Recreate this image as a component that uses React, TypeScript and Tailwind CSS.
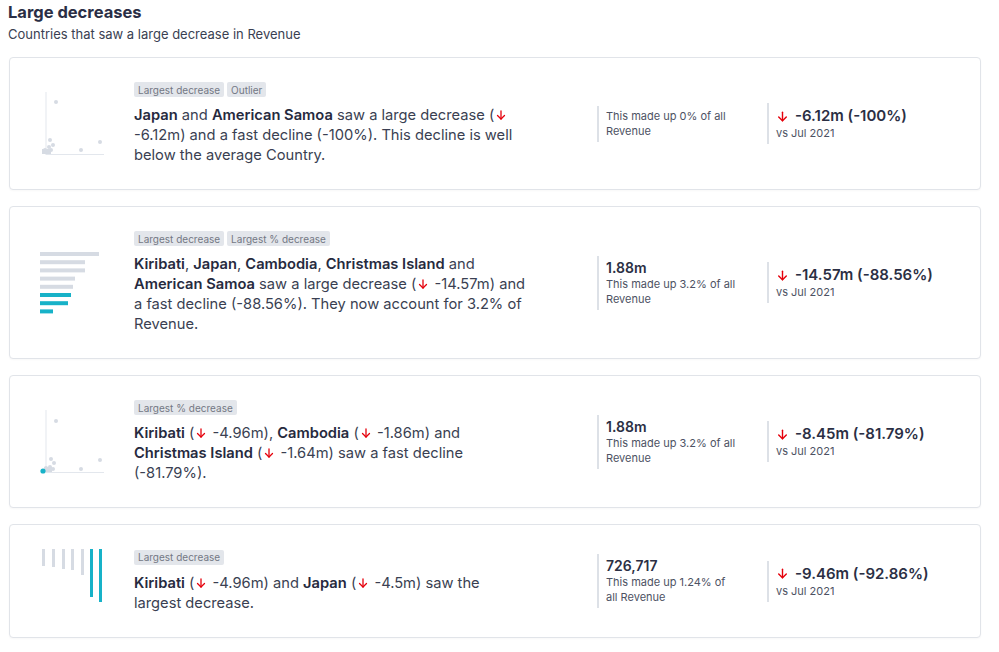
import React from "react";

const RED = "#e5000b";
const TEAL = "#17b2c8";
const GRAY = "#d6dbe3";

function Arrow({ size = 12, className = "" }: { size?: number; className?: string }) {
  return (
    <svg
      width={size}
      height={size}
      viewBox="0 0 24 24"
      fill="none"
      stroke={RED}
      strokeWidth={2.6}
      strokeLinecap="round"
      strokeLinejoin="round"
      className={"inline-block align-[-1px] " + className}
    >
      <path d="M12 4v16" />
      <path d="M5 13l7 7 7-7" />
    </svg>
  );
}

function Scatter1() {
  return (
    <svg width="64" height="64" viewBox="0 0 64 64">
      <line x1="6" y1="0" x2="6" y2="63" stroke="#e3e7ed" strokeWidth="1" />
      <line x1="6" y1="62.5" x2="64" y2="62.5" stroke="#e3e7ed" strokeWidth="1" />
      {[
        [16, 10],
        [10, 48],
        [13, 53],
        [9, 55],
        [5, 58],
        [8, 59],
        [11, 58],
        [41, 58],
        [60, 50],
      ].map(([x, y], i) => (
        <circle key={i} cx={x} cy={y} r="2" fill={GRAY} />
      ))}
      <rect x="2" y="57" width="9" height="5" fill={GRAY} />
    </svg>
  );
}

function Scatter3() {
  return (
    <svg width="64" height="64" viewBox="0 0 64 64">
      <line x1="6" y1="0" x2="6" y2="63" stroke="#e3e7ed" strokeWidth="1" />
      <line x1="6" y1="62.5" x2="64" y2="62.5" stroke="#e3e7ed" strokeWidth="1" />
      {[
        [16, 11],
        [11, 49],
        [14, 53],
        [10, 57],
        [6, 58],
        [9, 60],
        [13, 59],
        [41, 59],
        [60, 50],
      ].map(([x, y], i) => (
        <circle key={i} cx={x} cy={y} r="2" fill={GRAY} />
      ))}
      <rect x="4" y="57" width="8" height="5" fill={GRAY} />
      <circle cx="3" cy="61" r="2.6" fill={TEAL} />
    </svg>
  );
}

function HBars() {
  const bars: [number, string][] = [
    [59, GRAY],
    [45, GRAY],
    [45, GRAY],
    [35, GRAY],
    [33, GRAY],
    [31, TEAL],
    [28, TEAL],
    [13, TEAL],
  ];
  return (
    <svg width="64" height="64" viewBox="0 0 64 64">
      {bars.map(([w, c], i) => (
        <rect key={i} x="0" y={1 + i * 8.2} width={w} height="4" fill={c} />
      ))}
    </svg>
  );
}

function VBars() {
  const bars: [number, number, string][] = [
    [2, 17, GRAY],
    [12, 18, GRAY],
    [22, 20, GRAY],
    [31, 21, GRAY],
    [41, 26, GRAY],
    [50, 48, TEAL],
    [59, 53, TEAL],
  ];
  return (
    <svg width="64" height="64" viewBox="0 0 64 64">
      {bars.map(([x, h, c], i) => (
        <rect key={i} x={x} y="0" width="3" height={h} fill={c} />
      ))}
    </svg>
  );
}

function Tag({ children }: { children: React.ReactNode }) {
  return (
    <span className="inline-flex h-[15px] items-center rounded-[2px] bg-[#e3e6eb] px-[4px] text-[10px] leading-none text-[#737884]">
      {children}
    </span>
  );
}

function B({ children }: { children: React.ReactNode }) {
  return <span className="font-semibold text-[#262a3e]">{children}</span>;
}

type CardProps = {
  chart: React.ReactNode;
  tags: string[];
  text: React.ReactNode;
  value?: string;
  share: string;
  change: string;
};

function Card({ chart, tags, text, value, share, change }: CardProps) {
  return (
    <div className="flex items-center rounded-[4px] border border-[#e1e4e9] bg-white py-6 pl-[30px] pr-[23px] shadow-[0_1px_2px_rgba(0,0,0,0.03)]">
      <div className="h-[64px] w-[64px] flex-none">{chart}</div>
      <div className="ml-[30px] w-[394px] flex-none">
        <div className="flex gap-[3px]">
          {tags.map((t) => (
            <Tag key={t}>{t}</Tag>
          ))}
        </div>
        <div className="mt-[8px] text-[14.7px] leading-5 text-[#3a3f52]">{text}</div>
      </div>
      <div className="flex-1" />
      <div className="w-[170px] flex-none">
        <div className="w-[142px] border-l-2 border-[#dde1e7] py-[3px] pl-[7px]">
          {value && (
            <div className="text-[14px] font-semibold leading-[18px] text-[#2b2f44]">{value}</div>
          )}
          <div className="text-[11px] leading-[15px] text-[#4d5263]">{share}</div>
        </div>
      </div>
      <div className="w-[190px] flex-none">
        <div className="border-l-2 border-[#dde1e7] py-[3px] pl-[7px]">
          <div className="flex items-center gap-[6px] text-[15px] font-semibold leading-5 text-[#2b2f44]">
            <Arrow size={13} />
            <span>{change}</span>
          </div>
          <div className="text-[11px] leading-[15px] text-[#4d5263]">vs Jul 2021</div>
        </div>
      </div>
    </div>
  );
}

function Dn({ v }: { v: string }) {
  return (
    <>
      (<Arrow size={12} className="mx-[1px]" /> {v})
    </>
  );
}

export default function App() {
  return (
    <div
      className="min-h-screen bg-white px-2 pb-4 pr-[18px]"
      style={{ fontFamily: "Inter, 'Noto Sans', sans-serif" }}
    >
      <h1 className="text-[16.5px] font-bold leading-6 text-[#2a2e45]">Large decreases</h1>
      <p className="mt-[2px] text-[13px] leading-4 text-[#3a3f52]">
        Countries that saw a large decrease in Revenue
      </p>
      <div className="ml-px mt-[15px] flex flex-col gap-4">
        <Card
          chart={<Scatter1 />}
          tags={["Largest decrease", "Outlier"]}
          text={
            <>
              <B>Japan</B> and <B>American Samoa</B> saw a large decrease (
              <Arrow size={12} className="mx-[1px]" /> -6.12m) and a fast decline (-100%). This decline is
              well below the average Country.
            </>
          }
          share="This made up 0% of all Revenue"
          change="-6.12m (-100%)"
        />
        <Card
          chart={<HBars />}
          tags={["Largest decrease", "Largest % decrease"]}
          text={
            <>
              <B>Kiribati</B>, <B>Japan</B>, <B>Cambodia</B>, <B>Christmas Island</B> and{" "}
              <B>American Samoa</B> saw a large decrease <Dn v="-14.57m" /> and a fast decline (-88.56%).
              They now account for 3.2% of Revenue.
            </>
          }
          value="1.88m"
          share="This made up 3.2% of all Revenue"
          change="-14.57m (-88.56%)"
        />
        <Card
          chart={<Scatter3 />}
          tags={["Largest % decrease"]}
          text={
            <>
              <B>Kiribati</B> <Dn v="-4.96m" />, <B>Cambodia</B> <Dn v="-1.86m" /> and{" "}
              <B>Christmas Island</B> <Dn v="-1.64m" /> saw a fast decline (-81.79%).
            </>
          }
          value="1.88m"
          share="This made up 3.2% of all Revenue"
          change="-8.45m (-81.79%)"
        />
        <Card
          chart={<VBars />}
          tags={["Largest decrease"]}
          text={
            <>
              <B>Kiribati</B> <Dn v="-4.96m" /> and <B>Japan</B> <Dn v="-4.5m" /> saw the largest
              decrease.
            </>
          }
          value="726,717"
          share="This made up 1.24% of all Revenue"
          change="-9.46m (-92.86%)"
        />
      </div>
    </div>
  );
}
